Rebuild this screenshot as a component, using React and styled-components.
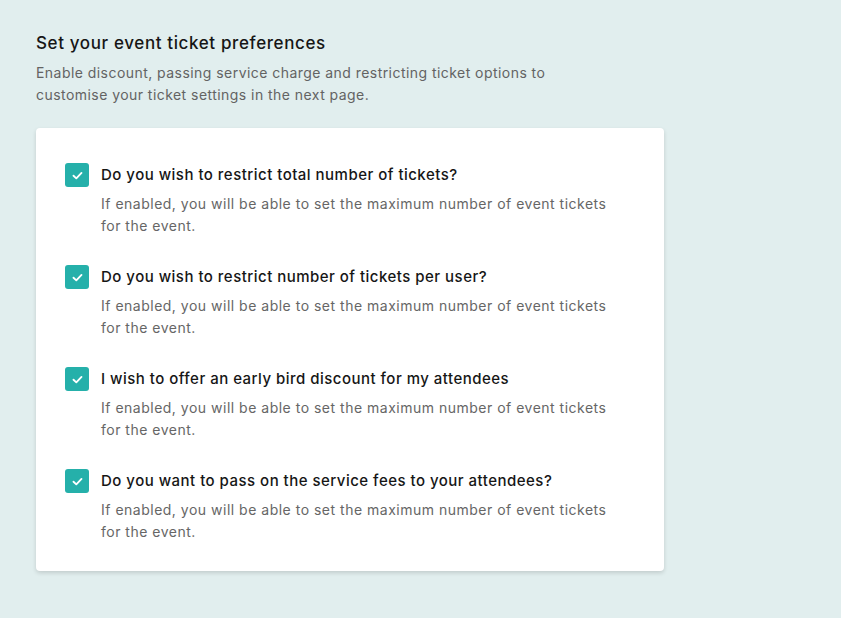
import styled, { createGlobalStyle } from "styled-components";

const GlobalStyle = createGlobalStyle`
  html, body {
    margin: 0;
    padding: 0;
    background: #e1eeee;
  }
  body {
    font-family: Inter, "Noto Sans", sans-serif;
  }
`;

const Page = styled.div`
  min-height: 618px;
  padding: 31px 36px 0;
  box-sizing: border-box;
  background: #e1eeee;
`;

const Title = styled.h1`
  margin: 0;
  font-size: 17px;
  line-height: 24px;
  font-weight: 500;
  letter-spacing: 0.62px;
  color: #161616;
`;

const Subtitle = styled.p`
  margin: 7px 0 0;
  width: 540px;
  font-size: 14px;
  line-height: 22px;
  letter-spacing: 0.45px;
  color: #636363;
`;

const Card = styled.div`
  margin-top: 22px;
  width: 628px;
  box-sizing: border-box;
  padding: 35px 29px 28px;
  background: #fff;
  border-radius: 4px;
  box-shadow: 0 2px 4px rgba(0, 0, 0, 0.14);
  display: flex;
  flex-direction: column;
  gap: 28px;
`;

const Option = styled.label`
  display: grid;
  grid-template-columns: 24px 1fr;
  column-gap: 12px;
  row-gap: 6px;
  cursor: pointer;
`;

const Box = styled.span`
  width: 24px;
  height: 24px;
  border-radius: 3px;
  background: ${(p) => (p.checked ? "#25b0aa" : "#fff")};
  border: ${(p) => (p.checked ? "none" : "1px solid #bbb")};
  display: flex;
  align-items: center;
  justify-content: center;
`;

const Label = styled.span`
  font-size: 15px;
  line-height: 24px;
  font-weight: 500;
  letter-spacing: 0.48px;
  color: #161616;
`;

const Hint = styled.span`
  grid-column: 2;
  max-width: 515px;
  font-size: 14px;
  line-height: 22px;
  letter-spacing: 0.5px;
  color: #666;
`;

const options = [
  "Do you wish to restrict total number of tickets?",
  "Do you wish to restrict number of tickets per user?",
  "I wish to offer an early bird discount for my attendees",
  "Do you want to pass on the service fees to your attendees?",
];

const Check = () => (
  <svg width="13" height="13" viewBox="0 0 12 12" fill="none">
    <path
      d="M2.3 6.2 L4.9 8.6 L9.7 3.6"
      stroke="#fff"
      strokeWidth="1.7"
      strokeLinecap="round"
      strokeLinejoin="round"
    />
  </svg>
);

export default function App() {
  return (
    <Page>
      <GlobalStyle />
      <Title>Set your event ticket preferences</Title>
      <Subtitle>
        Enable discount, passing service charge and restricting ticket options
        to customise your ticket settings in the next page.
      </Subtitle>
      <Card>
        {options.map((text) => (
          <Option key={text}>
            <Box checked>
              <Check />
            </Box>
            <Label>{text}</Label>
            <Hint>
              If enabled, you will be able to set the maximum number of event
              tickets for the event.
            </Hint>
          </Option>
        ))}
      </Card>
    </Page>
  );
}
